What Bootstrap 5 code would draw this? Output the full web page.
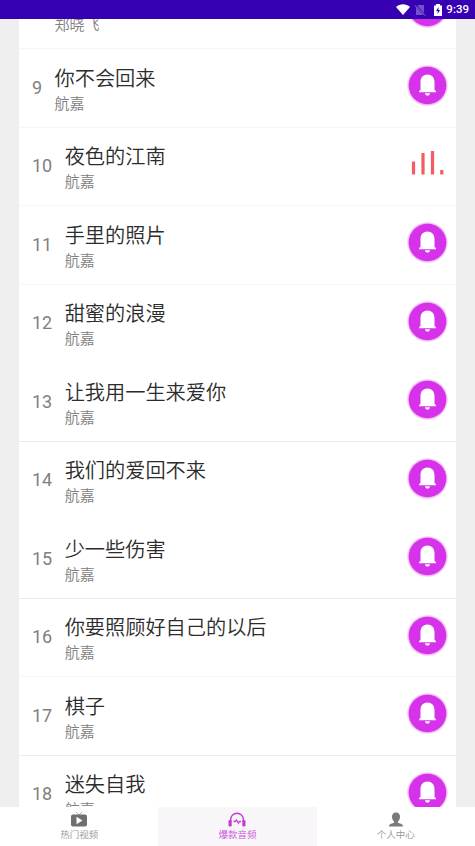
<!DOCTYPE html>
<html lang="zh-CN">
<head>
<meta charset="utf-8">
<meta name="viewport" content="width=device-width, initial-scale=1">
<title>爆款音频</title>
<link href="https://cdn.jsdelivr.net/npm/bootstrap@5.3.0/dist/css/bootstrap.min.css" rel="stylesheet">
<style>
body{font-family:Roboto,"Noto Sans CJK SC",sans-serif;background:#efefef;height:846px}
.status{height:19px;background:#3700b3;font-size:11.5px;line-height:19px;padding-right:6px}
.songs{margin:0 19px;background:#fff}
.songs-inner{margin-top:-48.4px}
.song{height:78.5px;border-bottom:1px solid #f6f6f6;padding:0 8px 0 13px}
.song.line{border-bottom-color:#ececec}
.song.plain{border-bottom-color:#fff}
.num{font-size:18px;color:#808080;line-height:20px}
.num-blank{width:10px}
.title{font-size:20.2px;line-height:28px;height:29px;color:#2c2c2c;font-weight:350}
.artist{font-size:15px;line-height:20px;height:20px;color:#808080;font-weight:350}
.names{margin-left:12.4px;padding-top:3px}
.bell{width:41px;height:41px;margin-top:-4px}
.bars{width:34px;height:26px;margin:-8px 4px 0 0}
.tabs{height:39px;background:#fff}
.tab{font-size:9.5px;line-height:12px;color:#959595;padding-top:4px;font-weight:350}
.tab svg{width:18px;height:18px}
.tab.on{background:#f8f6f8;color:#c94fd8}
</style>
<script src="https://cdn.jsdelivr.net/npm/bootstrap@5.3.0/dist/js/bootstrap.bundle.min.js"></script>
</head>
<body class="d-flex flex-column overflow-hidden">
<svg class="d-none">
<symbol id="bell" viewBox="0 0 41 41"><circle cx="20.5" cy="20.5" r="20.500" fill="#fae0fc"/><circle cx="20.500" cy="20.500" r="19.700" fill="#f3b8f8"/><circle cx="20.500" cy="20.500" r="18.800" fill="#d632ea"/><path d="M12 27.200v-.9l1.500-1.500v-7.800c0-4.800 2.900-7.600 7-7.600s7 2.800 7 7.600v7.800l1.500 1.500v.9zM18 28.200h5c-.3 1.600-1.100 2.300-2.500 2.300s-2.200-.7-2.500-2.300z" fill="#fff"/></symbol>
</svg>
<header class="status d-flex flex-shrink-0 justify-content-end align-items-center text-white">
<svg width="14" height="11" viewBox="0 0 14 11"><path d="M0 3C4-.7 10-.7 14 3L7 11z" fill="#fff"/></svg>
<svg class="ms-1" width="12" height="12" viewBox="0 0 12 12"><path d="M4.500 1H10v10H2V4z" fill="#7652c9"/><path d="M1 1l10 10.500" stroke="#3700b3" stroke-width="2"/><path d="M1 1.500l10 10" stroke="#a18ade"/></svg>
<svg class="ms-2" width="8" height="12" viewBox="0 0 8 12"><path d="M0 1.500h2V0h4v1.500h2V12H0z" fill="#fff"/><path d="M4.600 3L2 7h1.700v3L6 6H4.400z" fill="#3700b3"/></svg>
<span class="ms-1 fw-medium">9:39</span>
</header>
<main class="songs flex-grow-1 overflow-hidden"><div class="songs-inner">
<div class="song d-flex align-items-center"><span class="num-blank"></span><div class="names flex-grow-1"><div class="title"></div><div class="artist">郑晓飞</div></div><svg class="bell"><use href="#bell"/></svg></div>
<div class="song d-flex align-items-center"><span class="num">9</span><div class="names flex-grow-1"><div class="title">你不会回来</div><div class="artist">航嘉</div></div><svg class="bell"><use href="#bell"/></svg></div>
<div class="song d-flex align-items-center"><span class="num">10</span><div class="names flex-grow-1"><div class="title">夜色的江南</div><div class="artist">航嘉</div></div><svg class="bars" viewBox="0 0 34 26"><path d="M3.500 14v10M13 5.500V24M22.500 3.500V24M31.800 22.500V24" stroke="#f25c65" stroke-width="3.200" stroke-linecap="square" fill="none"/></svg></div>
<div class="song d-flex align-items-center"><span class="num">11</span><div class="names flex-grow-1"><div class="title">手里的照片</div><div class="artist">航嘉</div></div><svg class="bell"><use href="#bell"/></svg></div>
<div class="song plain d-flex align-items-center"><span class="num">12</span><div class="names flex-grow-1"><div class="title">甜蜜的浪漫</div><div class="artist">航嘉</div></div><svg class="bell"><use href="#bell"/></svg></div>
<div class="song line d-flex align-items-center"><span class="num">13</span><div class="names flex-grow-1"><div class="title">让我用一生来爱你</div><div class="artist">航嘉</div></div><svg class="bell"><use href="#bell"/></svg></div>
<div class="song plain d-flex align-items-center"><span class="num">14</span><div class="names flex-grow-1"><div class="title">我们的爱回不来</div><div class="artist">航嘉</div></div><svg class="bell"><use href="#bell"/></svg></div>
<div class="song line d-flex align-items-center"><span class="num">15</span><div class="names flex-grow-1"><div class="title">少一些伤害</div><div class="artist">航嘉</div></div><svg class="bell"><use href="#bell"/></svg></div>
<div class="song d-flex align-items-center"><span class="num">16</span><div class="names flex-grow-1"><div class="title">你要照顾好自己的以后</div><div class="artist">航嘉</div></div><svg class="bell"><use href="#bell"/></svg></div>
<div class="song line d-flex align-items-center"><span class="num">17</span><div class="names flex-grow-1"><div class="title">棋子</div><div class="artist">航嘉</div></div><svg class="bell"><use href="#bell"/></svg></div>
<div class="song d-flex align-items-center"><span class="num">18</span><div class="names flex-grow-1"><div class="title">迷失自我</div><div class="artist">航嘉</div></div><svg class="bell"><use href="#bell"/></svg></div>
</div></main>
<nav class="tabs d-flex flex-shrink-0 text-center">
<div class="tab d-flex flex-column align-items-center flex-fill w-100"><svg viewBox="0 0 18 18"><path d="M6 1l3 3 3-3" fill="none" stroke="#999" stroke-width=".8"/><rect x="1" y="3.500" width="16" height="12" rx="2" fill="#6f6f6f"/><path d="M6.500 5.700l6 3.800-6 3.800z" fill="#fff"/></svg>热门视频</div>
<div class="tab on d-flex flex-column align-items-center flex-fill w-100"><svg viewBox="0 0 18 18"><path d="M2.700 11V8.500a6.300 6.300 0 0 1 12.600 0V11" fill="none" stroke="#c63bd6" stroke-width="1.400"/><rect x=".5" y="9" width="3.200" height="6.500" rx="1.200" fill="#c63bd6"/><rect x="14.300" y="9" width="3.200" height="6.500" rx="1.200" fill="#c63bd6"/><path d="M5.500 10.500h1.700L8.500 9l2 3 1-1.500h1.500" fill="none" stroke="#c63bd6" stroke-width="1.300"/></svg>爆款音频</div>
<div class="tab d-flex flex-column align-items-center flex-fill w-100"><svg viewBox="0 0 18 18"><path d="M9 1.500c2.600 0 4 1.800 4 4.300 0 1.900-.8 3.600-2 4.600v1.400c1.300.9 5 .8 5 3.700H2c0-2.900 3.700-2.800 5-3.700v-1.400c-1.200-1-2-2.700-2-4.600 0-2.500 1.400-4.300 4-4.300z" fill="#7a7a7a"/></svg>个人中心</div>
</nav>
</body>
</html>
